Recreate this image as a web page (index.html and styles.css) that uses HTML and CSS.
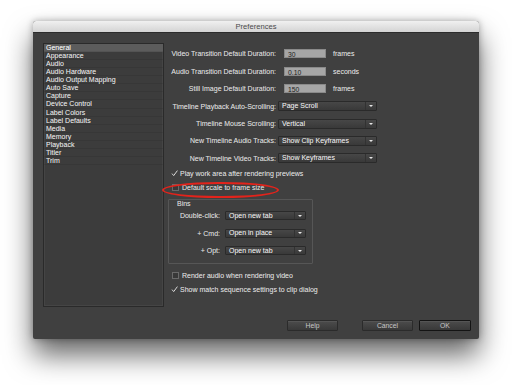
FILE: index.html
```html
<!DOCTYPE html>
<html>
<head>
<meta charset="utf-8">
<link rel="stylesheet" href="styles.css">
</head>
<body>
<div class="window">
  <div class="titlebar">Preferences</div>
  <div class="main">
    <div class="content">
      <ul class="list">
        <li class="sel">General</li>
        <li>Appearance</li>
        <li>Audio</li>
        <li>Audio Hardware</li>
        <li>Audio Output Mapping</li>
        <li>Auto Save</li>
        <li>Capture</li>
        <li>Device Control</li>
        <li>Label Colors</li>
        <li>Label Defaults</li>
        <li>Media</li>
        <li>Memory</li>
        <li>Playback</li>
        <li>Titler</li>
        <li>Trim</li>
      </ul>
      <div class="form">
        <div class="row">
          <span class="lbl">Video Transition Default Duration:</span>
          <span class="field">30</span><span class="unit">frames</span>
        </div>
        <div class="row">
          <span class="lbl">Audio Transition Default Duration:</span>
          <span class="field">0.10</span><span class="unit">seconds</span>
        </div>
        <div class="row">
          <span class="lbl">Still Image Default Duration:</span>
          <span class="field">150</span><span class="unit">frames</span>
        </div>
        <div class="row">
          <span class="lbl">Timeline Playback Auto-Scrolling:</span>
          <div class="select wide"><span class="sv">Page Scroll</span><span class="arrow"></span></div>
        </div>
        <div class="row">
          <span class="lbl">Timeline Mouse Scrolling:</span>
          <div class="select wide"><span class="sv">Vertical</span><span class="arrow"></span></div>
        </div>
        <div class="row">
          <span class="lbl">New Timeline Audio Tracks:</span>
          <div class="select wide"><span class="sv">Show Clip Keyframes</span><span class="arrow"></span></div>
        </div>
        <div class="row">
          <span class="lbl">New Timeline Video Tracks:</span>
          <div class="select wide"><span class="sv">Show Keyframes</span><span class="arrow"></span></div>
        </div>

        <div class="check-row">
          <span class="cb"><svg width="7" height="7" viewBox="0 0 7 7"><path d="M1 3.6 L2.7 5.6 L6.4 0.6" fill="none" stroke="#d8d8d8" stroke-width="1"/></svg></span>
          <span>Play work area after rendering previews</span>
        </div>
        <div class="check-row annotated">
          <span class="cb box"></span>
          <span>Default scale to frame size</span>
          <span class="ellipse"></span>
        </div>

        <div class="bins">
          <div class="bins-title">Bins</div>
          <div class="brow">
            <span class="blbl">Double-click:</span>
            <div class="select narrow"><span class="sv">Open new tab</span><span class="arrow"></span></div>
          </div>
          <div class="brow">
            <span class="blbl">+ Cmd:</span>
            <div class="select narrow"><span class="sv">Open in place</span><span class="arrow"></span></div>
          </div>
          <div class="brow">
            <span class="blbl">+ Opt:</span>
            <div class="select narrow"><span class="sv">Open new tab</span><span class="arrow"></span></div>
          </div>
        </div>

        <div class="check-row low first">
          <span class="cb box"></span>
          <span>Render audio when rendering video</span>
        </div>
        <div class="check-row low">
          <span class="cb"><svg width="7" height="7" viewBox="0 0 7 7"><path d="M1 3.6 L2.7 5.6 L6.4 0.6" fill="none" stroke="#d8d8d8" stroke-width="1"/></svg></span>
          <span>Show match sequence settings to clip dialog</span>
        </div>
      </div>
    </div>
    <div class="footer">
      <button class="btn help">Help</button>
      <button class="btn cancel">Cancel</button>
      <button class="btn ok">OK</button>
    </div>
  </div>
</div>
</body>
</html>
```

FILE: styles.css
```css
html, body {
  margin: 0;
  padding: 0;
  background: #ffffff;
}
body {
  width: 512px;
  height: 385px;
  overflow: hidden;
  padding: 21px 0 0 33px;
  box-sizing: border-box;
  font-family: "Liberation Sans", Arial, sans-serif;
  font-size: 7px;
  color: #d4d4d4;
  text-shadow: 0 0 0.5px rgba(220, 220, 220, 0.6);
}
.window {
  width: 446px;
  height: 318px;
  display: flex;
  flex-direction: column;
  background: #404040;
  border-radius: 3px 3px 2px 2px;
  box-shadow: 0 16px 28px rgba(0, 0, 0, 0.6), 0 0 7px rgba(0, 0, 0, 0.3);
}
.titlebar {
  height: 12px;
  line-height: 12px;
  text-align: center;
  font-size: 7.6px;
  color: #4a4a4a;
  text-shadow: none;
  background: linear-gradient(#f0f0f0, #d4d4d4);
  border-radius: 3px 3px 0 0;
  border-bottom: 1px solid #2c2c2c;
  box-sizing: border-box;
}
.main {
  flex: 1;
  display: flex;
  flex-direction: column;
  padding: 10px 8px 8px 10px;
}
.content {
  display: flex;
  flex: 1;
}
.list {
  list-style: none;
  margin: 0;
  padding: 0;
  width: 121px;
  height: 264px;
  box-sizing: border-box;
  background: #3c3c3c;
  border: 1px solid #2a2a2a;
  box-shadow: inset 0 0 0 1px #454545;
}
.list li {
  height: 8.07px;
  line-height: 8.07px;
  padding-left: 2px;
  color: #dcdcdc;
  border-bottom: 1px solid rgba(0, 0, 0, 0.08);
  box-sizing: border-box;
}
.list li.sel {
  background: #5c5c5c;
  color: #f0f0f0;
}
.form {
  flex: 1;
  padding-top: 2.3px;
  display: flex;
  flex-direction: column;
}
.row {
  height: 17.4px;
  display: flex;
  align-items: center;
}
.lbl {
  width: 112px;
  text-align: right;
  white-space: nowrap;
  color: #d2d2d2;
}
.field {
  margin-left: 8px;
  width: 42px;
  height: 9px;
  line-height: 9px;
  box-sizing: border-box;
  padding-left: 3px;
  background: #a6a6a6;
  border: 1px solid #8a8a8a;
  color: #1e1e1e;
  text-shadow: none;
  font-size: 6.8px;
}
.unit {
  margin-left: 7px;
  color: #d2d2d2;
}
.select {
  height: 10px;
  box-sizing: border-box;
  display: flex;
  align-items: center;
  background: linear-gradient(#474747, #393939);
  border: 1px solid #2a2a2a;
  border-radius: 1px;
  color: #dedede;
}
.select.wide {
  margin-left: 2px;
  width: 99px;
}
.select .sv {
  flex: 1;
  padding-left: 3px;
  white-space: nowrap;
  line-height: 8px;
}
.select .arrow {
  width: 11px;
  height: 8px;
  border-left: 1px solid #323232;
  position: relative;
  box-sizing: border-box;
}
.select .arrow::after {
  content: "";
  position: absolute;
  left: 3px;
  top: 3px;
  border-left: 2px solid transparent;
  border-right: 2px solid transparent;
  border-top: 2.5px solid #e6e6e6;
}
.check-row {
  height: 13px;
  display: flex;
  align-items: center;
  padding-left: 7px;
  position: relative;
  color: #d2d2d2;
}
.check-row.annotated {
  padding-top: 1px;
}
.cb {
  width: 7px;
  height: 7px;
  margin-right: 2px;
  display: flex;
  align-items: center;
  justify-content: center;
}
.cb.box {
  width: 5px;
  height: 5px;
  margin: 0 3px 0 1px;
  border: 1px solid #6a6a6a;
  background: #383838;
}
.ellipse {
  position: absolute;
  left: -2px;
  top: 1.5px;
  width: 117px;
  height: 16.5px;
  box-sizing: border-box;
  border: 2px solid #e3231b;
  border-radius: 50%;
}
.bins {
  margin: 5px 0 0 4px;
  width: 145px;
  height: 64.5px;
  box-sizing: border-box;
  border: 1px solid #565656;
  border-radius: 1px;
}
.bins-title {
  height: 7px;
  line-height: 7px;
  padding-left: 8px;
  color: #cfcfcf;
}
.brow {
  height: 17.5px;
  display: flex;
  align-items: center;
}
.blbl {
  width: 51px;
  text-align: right;
  color: #d2d2d2;
  white-space: nowrap;
}
.select.narrow {
  margin-left: 5px;
  width: 81px;
  height: 9px;
}
.select.narrow .arrow {
  height: 7px;
}
.select.narrow .arrow::after {
  top: 2.5px;
}
.check-row.low {
  height: 14px;
}
.check-row.low.first {
  margin-top: 4.5px;
}
.footer {
  display: flex;
  justify-content: flex-end;
  height: 11px;
}
.btn {
  margin: 0;
  padding: 0;
  width: 51px;
  height: 11px;
  font-family: "Liberation Sans", Arial, sans-serif;
  font-size: 6.8px;
  color: #c8c8c8;
  background: linear-gradient(#4c4c4c, #393939);
  border: 1px solid #2b2b2b;
  border-radius: 1px;
  box-shadow: inset 0 1px 0 rgba(255, 255, 255, 0.06);
}
.btn.cancel {
  margin-left: 24px;
}
.btn.ok {
  margin-left: 6px;
  width: 52px;
  border: 1px solid #141414;
}
```
